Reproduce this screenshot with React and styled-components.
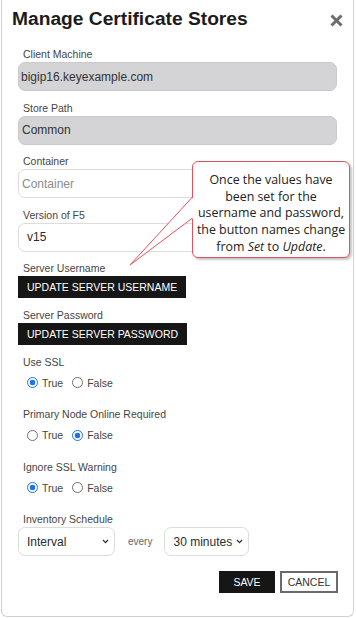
import React from "react";
import styled, { createGlobalStyle } from "styled-components";

const Global = createGlobalStyle`
  body {
    margin: 0;
    background: #fff;
    font-family: "Liberation Sans", Arial, sans-serif;
  }
`;

const Dialog = styled.div`
  position: relative;
  box-sizing: border-box;
  width: 353px;
  height: 617px;
  margin-left: 1px;
  border: 1px solid #d2d2d2;
  border-top: none;
  border-radius: 0 0 6px 6px;
  background: #fff;
`;

const Header = styled.div`
  display: flex;
  justify-content: space-between;
  align-items: center;
  padding: 8px 10px 0 10px;
`;

const Title = styled.h1`
  margin: 0;
  font-size: 19.2px;
  line-height: 22px;
  font-weight: bold;
  color: #1b1b1b;
`;

const Close = styled.button`
  display: flex;
  border: 0;
  padding: 0;
  background: none;
  margin-top: 2px;
`;

const Form = styled.div`
  padding: 18px 16px 0 16px;
`;

const Field = styled.div`
  margin-bottom: 10.6px;
`;

const Label = styled.div`
  font-size: 10.5px;
  line-height: 12px;
  color: #454545;
  padding-left: 5px;
  margin-bottom: 2px;
`;

const Input = styled.div`
  box-sizing: border-box;
  height: 29px;
  display: flex;
  align-items: center;
  padding-left: ${(p) => p.$pad || 2}px;
  font-size: 12px;
  color: ${(p) => (p.$placeholder ? "#8c8c8c" : "#333")};
  background: ${(p) => (p.$disabled ? "#d4d4d7" : "#fff")};
  border: 1px solid ${(p) => (p.$disabled ? "#cacaca" : "#dcdcdc")};
  border-radius: 7px;
`;

const SelectBox = styled.div`
  box-sizing: border-box;
  width: ${(p) => p.$w || "100%"};
  height: 29px;
  display: flex;
  align-items: center;
  justify-content: space-between;
  padding: 0 5px 0 8px;
  font-size: 12px;
  color: #2c2c2c;
  background: #fff;
  border: 1px solid #dcdcdc;
  border-radius: 7px;
`;

const DarkButton = styled.button`
  height: 22px;
  padding: 0 9px;
  border: 0;
  background: #161616;
  color: #fff;
  font-family: "Liberation Sans", Arial, sans-serif;
  font-size: 10.5px;
  text-transform: uppercase;
  display: block;
`;

const RadioRow = styled.div`
  display: flex;
  align-items: center;
  height: 14px;
  padding: 6px 0 8px 9px;
  gap: 9px;
`;

const RadioOption = styled.label`
  display: flex;
  align-items: center;
  gap: 4px;
  font-size: 10.5px;
  color: #444;
`;

const Radio = styled.span`
  box-sizing: border-box;
  width: 11px;
  height: 11px;
  border-radius: 50%;
  border: ${(p) => (p.$on ? "1.5px solid #1a73e8" : "1px solid #6f6f6f")};
  background: ${(p) =>
    p.$on ? "radial-gradient(circle, #1a73e8 0 2.6px, #fff 3.1px)" : "#fff"};
`;

const ScheduleRow = styled.div`
  display: flex;
  align-items: center;
`;

const Every = styled.span`
  font-size: 10px;
  color: #666;
  margin: 0 12px 0 13px;
`;

const Footer = styled.div`
  display: flex;
  justify-content: flex-end;
  gap: 5px;
  margin-top: 15px;
  margin-right: -1px;
`;

const FootButton = styled.button`
  box-sizing: border-box;
  height: 22px;
  width: ${(p) => p.$w}px;
  padding: 0;
  font-family: "Liberation Sans", Arial, sans-serif;
  font-size: 10.5px;
  background: ${(p) => (p.$primary ? "#161616" : "#fff")};
  color: ${(p) => (p.$primary ? "#fff" : "#333")};
  border: ${(p) => (p.$primary ? "0" : "2px solid #6a6a6a")};
`;

const Callout = styled.div`
  position: absolute;
  left: 190px;
  top: 161px;
  box-sizing: border-box;
  width: 158px;
  height: 97px;
  padding: 10px 0 0;
  background: #fff;
  border: 1px solid #e2525d;
  border-radius: 6px;
  box-shadow: 2px 2px 2px rgba(0, 0, 0, 0.22);
  font-family: "Open Sans", "Noto Sans", sans-serif;
  font-size: 12.4px;
  line-height: 16.7px;
  text-align: center;
  white-space: nowrap;
  color: #222;
  z-index: 2;
`;

const Tail = styled.svg`
  position: absolute;
  left: 126px;
  top: 195px;
  z-index: 3;
  overflow: visible;
`;

const Chevron = () => (
  <svg width="7" height="5" viewBox="0 0 7 5">
    <path d="M1 1 L3.5 3.6 L6 1" fill="none" stroke="#333" strokeWidth="1.3" />
  </svg>
);

const RadioGroup = ({ label, value }) => (
  <Field>
    <Label>{label}</Label>
    <RadioRow>
      <RadioOption>
        <Radio $on={value} />
        True
      </RadioOption>
      <RadioOption>
        <Radio $on={!value} />
        False
      </RadioOption>
    </RadioRow>
  </Field>
);

export default function App() {
  return (
    <>
      <Global />
      <Dialog>
        <Header>
          <Title>Manage Certificate Stores</Title>
          <Close aria-label="close">
            <svg width="13" height="13" viewBox="0 0 13 13">
              <path
                d="M1.5 1.5 L11.5 11.5 M11.5 1.5 L1.5 11.5"
                stroke="#6c6c6c"
                strokeWidth="3"
              />
            </svg>
          </Close>
        </Header>
        <Form>
          <Field>
            <Label>Client Machine</Label>
            <Input $disabled>bigip16.keyexample.com</Input>
          </Field>
          <Field>
            <Label>Store Path</Label>
            <Input $disabled $pad={3}>Common</Input>
          </Field>
          <Field>
            <Label>Container</Label>
            <Input $placeholder $pad={3}>Container</Input>
          </Field>
          <Field>
            <Label>Version of F5</Label>
            <SelectBox>
              v15
              <Chevron />
            </SelectBox>
          </Field>
          <Field>
            <Label>Server Username</Label>
            <DarkButton>Update Server Username</DarkButton>
          </Field>
          <Field>
            <Label>Server Password</Label>
            <DarkButton>Update Server Password</DarkButton>
          </Field>
          <RadioGroup label="Use SSL" value={true} />
          <RadioGroup label="Primary Node Online Required" value={false} />
          <RadioGroup label="Ignore SSL Warning" value={true} />
          <Field>
            <Label>Inventory Schedule</Label>
            <ScheduleRow>
              <SelectBox $w="97px">
                Interval
                <Chevron />
              </SelectBox>
              <Every>every</Every>
              <SelectBox $w="85px">
                30 minutes
                <Chevron />
              </SelectBox>
            </ScheduleRow>
          </Field>
          <Footer>
            <FootButton $primary $w={56}>SAVE</FootButton>
            <FootButton $w={58}>CANCEL</FootButton>
          </Footer>
        </Form>
        <Callout>
          Once the values have
          <br />
          been set for the
          <br />
          username and password,
          <br />
          the button names change
          <br />
          from <i>Set</i> to <i>Update</i>.
        </Callout>
        <Tail width="66" height="73" viewBox="0 0 66 73">
          <polygon points="65.5,2 2,70 65.5,23" fill="#fff" />
          <polyline
            points="64.5,2 2,70 64.5,23"
            fill="none"
            stroke="#e2525d"
            strokeWidth="1"
          />
        </Tail>
      </Dialog>
    </>
  );
}
